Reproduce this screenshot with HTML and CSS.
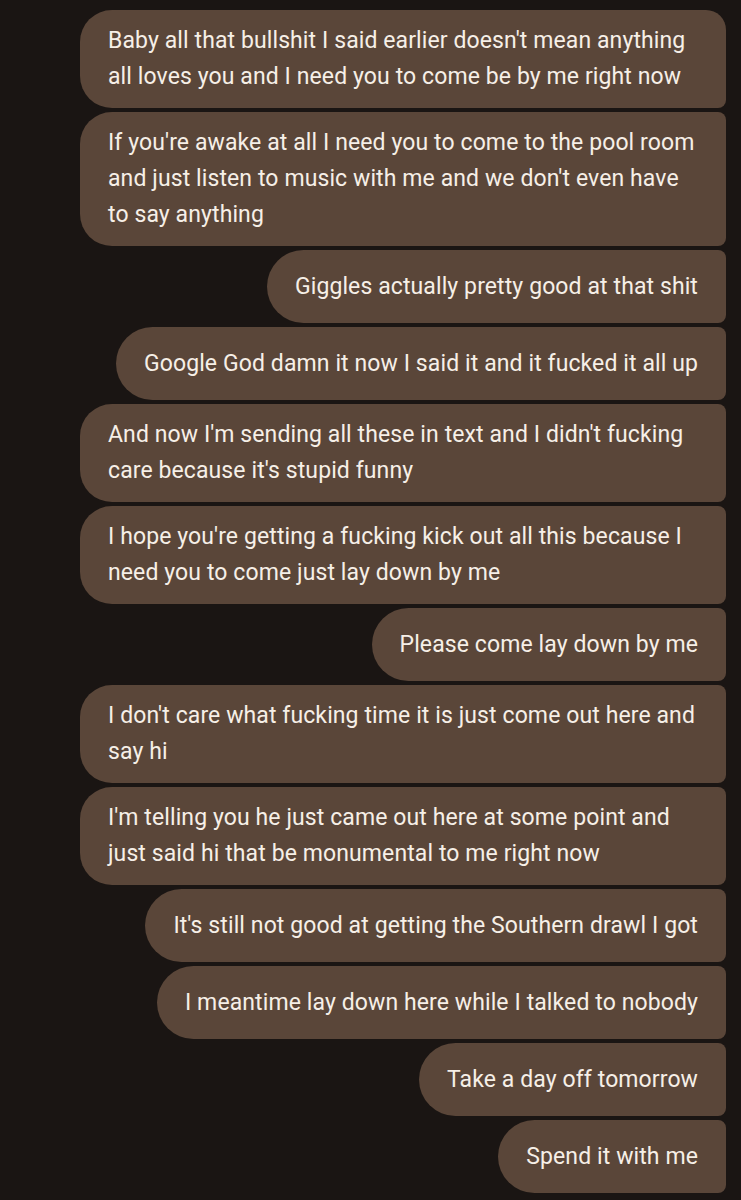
FILE: index.html
```html
<!DOCTYPE html>
<html lang="en">
<head>
<meta charset="utf-8">
<title>Messages</title>
<link rel="stylesheet" href="styles.css">
</head>
<body>
<main class="thread">
  <div class="bubble first">Baby all that bullshit I said earlier doesn't mean anything all loves you and I need you to come be by me right now</div>
  <div class="bubble">If you're awake at all I need you to come to the pool room and just listen to music with me and we don't even have to say anything</div>
  <div class="bubble single">Giggles actually pretty good at that shit</div>
  <div class="bubble single">Google God damn it now I said it and it fucked it all up</div>
  <div class="bubble">And now I'm sending all these in text and I didn't fucking care because it's stupid funny</div>
  <div class="bubble">I hope you're getting a fucking kick out all this because I need you to come just lay down by me</div>
  <div class="bubble single">Please come lay down by me</div>
  <div class="bubble">I don't care what fucking time it is just come out here and say hi</div>
  <div class="bubble">I'm telling you he just came out here at some point and just said hi that be monumental to me right now</div>
  <div class="bubble single">It's still not good at getting the Southern drawl I got</div>
  <div class="bubble single">I meantime lay down here while I talked to nobody</div>
  <div class="bubble single">Take a day off tomorrow</div>
  <div class="bubble single">Spend it with me</div>
</main>
</body>
</html>
```

FILE: styles.css
```css
html, body {
  margin: 0;
  padding: 0;
  background: #1a1513;
}

body {
  width: 741px;
  height: 1200px;
  overflow: hidden;
  font-family: "Roboto", "Liberation Sans", sans-serif;
}

.thread {
  display: flex;
  flex-direction: column;
  align-items: flex-end;
  gap: 4px;
  padding: 10px 15px 0 0;
}

.bubble {
  box-sizing: border-box;
  max-width: 646px;
  padding: 13px 28px 13px 28px;
  background: #5a4639;
  color: #f6efe7;
  font-size: 23px;
  letter-spacing: 0.1px;
  line-height: 36px;
  border-radius: 32px 8px 8px 32px;
}

.bubble.first {
  border-top-right-radius: 20px;
}

.bubble.single {
  min-height: 73px;
  display: flex;
  align-items: center;
  border-radius: 37px 8px 8px 37px;
}
```
